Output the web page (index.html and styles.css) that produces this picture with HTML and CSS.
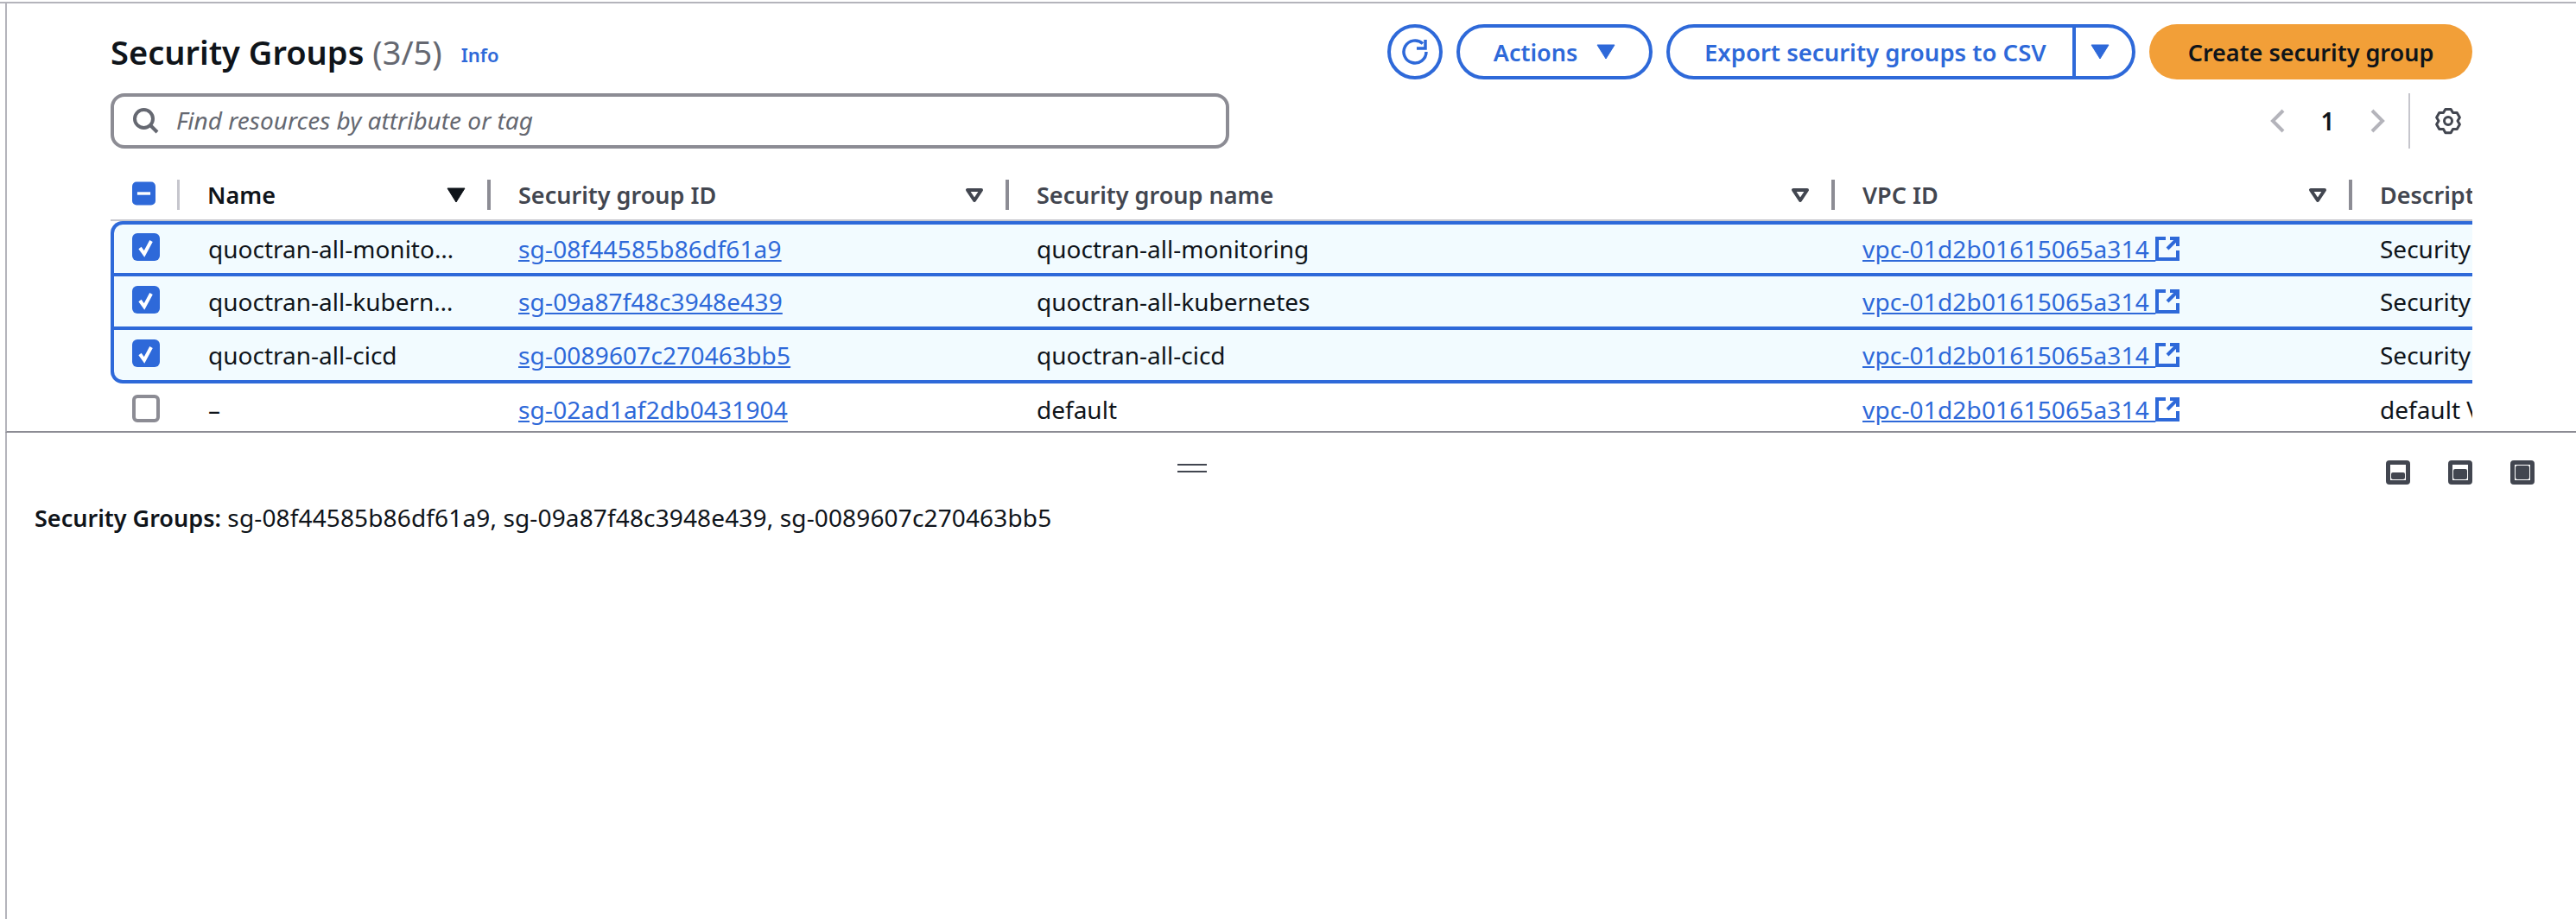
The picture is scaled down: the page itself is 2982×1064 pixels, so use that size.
FILE: index.html
```html
<!DOCTYPE html>
<html lang="en">
<head>
  <meta charset="UTF-8">
  <title>Security Groups</title>
  <link rel="stylesheet" href="styles.css">
</head>
<body>
  <svg class="defs" width="0" height="0">
    <symbol id="ext" viewBox="0 0 28 28">
      <path d="M12 2H2v24h24V16M17 2h9v9M26 2L14 14" fill="none" stroke="currentColor" stroke-width="4"/>
    </symbol>
    <symbol id="check" viewBox="0 0 32 32">
      <rect width="32" height="32" rx="6" fill="#2e69d9"/>
      <path d="M9 17l5 7 8-15" fill="none" stroke="#fff" stroke-width="4"/>
    </symbol>
    <symbol id="sort" viewBox="0 0 22 18">
      <path d="M3 3h16l-8 12z" fill="none" stroke="currentColor" stroke-width="4" stroke-linejoin="round"/>
    </symbol>
    <symbol id="caret" viewBox="0 0 22 18">
      <path d="M1 1h20l-10 16z" fill="currentColor" stroke="currentColor" stroke-linejoin="round"/>
    </symbol>
  </svg>

  <div class="pane">
    <section class="upper">
      <div class="title-row">
        <h1 class="title">Security Groups <span class="count">(3/5)</span></h1>
        <a class="info" href="#">Info</a>
        <div class="actions">
          <button class="btn btn-icon">
            <svg width="32" height="34" viewBox="0 0 32 32" fill="none" stroke="currentColor" stroke-width="3.5"><path d="M29 16A13 13 0 1 1 25 6.600"/><path d="M28 2v10H18"/></svg>
          </button>
          <button class="btn btn-actions">Actions <svg class="caret" width="22" height="18"><use href="#caret"/></svg></button>
          <div class="btn btn-split">
            <span class="split-label">Export security groups to CSV</span>
            <span class="split-arrow"><svg class="caret" width="22" height="18"><use href="#caret"/></svg></span>
          </div>
          <button class="btn btn-primary">Create security group</button>
        </div>
      </div>

      <div class="filter-row">
        <div class="search">
          <svg width="30" height="30" viewBox="0 0 30 30" fill="none" stroke="currentColor" stroke-width="4"><circle cx="12.500" cy="12.500" r="10.500"/><path d="M20 20l8 8"/></svg>
          <span class="placeholder">Find resources by attribute or tag</span>
        </div>
        <div class="pager">
          <svg width="18" height="28" viewBox="0 0 18 28" fill="none" stroke="currentColor" stroke-width="4"><path d="M15 2L3 14l12 12"/></svg>
          <span class="page-num">1</span>
          <svg width="18" height="28" viewBox="0 0 18 28" fill="none" stroke="currentColor" stroke-width="4"><path d="M3 2l12 12L3 26"/></svg>
        </div>
        <div class="settings">
          <svg width="32" height="32" viewBox="0 0 32 32" fill="none" stroke="currentColor" stroke-width="3" stroke-linejoin="round"><path d="M12.850 2.400h6.300l2.350 4.100 4.740-.05 3.150 5.460L27 16l2.390 4.090-3.150 5.460-4.740-.02-2.350 4.110h-6.300l-2.350-4.110-4.740.02-3.150-5.460L5 16 2.610 11.910l3.150-5.460 4.740.02z"/><circle cx="16" cy="16" r="4.500"/></svg>
        </div>
      </div>

      <div class="table-wrap">
        <table class="sg-table">
          <colgroup>
            <col class="col-select">
            <col class="col-name">
            <col class="col-id">
            <col class="col-group">
            <col class="col-vpc">
            <col class="col-desc">
          </colgroup>
          <thead>
            <tr>
              <th><div class="th-inner th-select"><svg width="32" height="32" viewBox="0 0 32 32"><rect width="32" height="32" rx="6" fill="#2e69d9"/><rect x="7" y="14" width="18" height="4" fill="#fff"/></svg></div></th>
              <th><div class="th-inner sorted"><span>Name</span><svg width="22" height="18"><use href="#caret"/></svg></div></th>
              <th><div class="th-inner"><span>Security group ID</span><svg width="22" height="18"><use href="#sort"/></svg></div></th>
              <th><div class="th-inner"><span>Security group name</span><svg width="22" height="18"><use href="#sort"/></svg></div></th>
              <th><div class="th-inner"><span>VPC ID</span><svg width="22" height="18"><use href="#sort"/></svg></div></th>
              <th><div class="th-inner"><span>Description</span></div></th>
            </tr>
          </thead>
          <tbody>
            <tr class="selected first">
              <td><svg class="box" width="32" height="32"><use href="#check"/></svg></td>
              <td>quoctran-all-monitoring</td>
              <td><a href="#">sg-08f44585b86df61a9</a></td>
              <td>quoctran-all-monitoring</td>
              <td><a href="#">vpc-01d2b01615065a314 </a><svg class="ext" width="28" height="28"><use href="#ext"/></svg></td>
              <td>Security group for monitoring</td>
            </tr>
            <tr class="selected">
              <td><svg class="box" width="32" height="32"><use href="#check"/></svg></td>
              <td>quoctran-all-kubernetes</td>
              <td><a href="#">sg-09a87f48c3948e439</a></td>
              <td>quoctran-all-kubernetes</td>
              <td><a href="#">vpc-01d2b01615065a314 </a><svg class="ext" width="28" height="28"><use href="#ext"/></svg></td>
              <td>Security group for kubernetes</td>
            </tr>
            <tr class="selected last">
              <td><svg class="box" width="32" height="32"><use href="#check"/></svg></td>
              <td>quoctran-all-cicd</td>
              <td><a href="#">sg-0089607c270463bb5</a></td>
              <td>quoctran-all-cicd</td>
              <td><a href="#">vpc-01d2b01615065a314 </a><svg class="ext" width="28" height="28"><use href="#ext"/></svg></td>
              <td>Security group for cicd</td>
            </tr>
            <tr class="plain">
              <td><span class="box-empty"></span></td>
              <td>–</td>
              <td><a href="#">sg-02ad1af2db0431904</a></td>
              <td>default</td>
              <td><a href="#">vpc-01d2b01615065a314 </a><svg class="ext" width="28" height="28"><use href="#ext"/></svg></td>
              <td>default VPC security group</td>
            </tr>
          </tbody>
        </table>
      </div>
    </section>

    <section class="lower">
      <div class="lower-bar">
        <span class="handle"></span>
        <div class="split-modes">
          <svg width="28" height="28" viewBox="0 0 28 28"><rect x="2.500" y="2.500" width="23" height="23" rx="1.500" fill="none" stroke="currentColor" stroke-width="5"/><rect x="6" y="14" width="16" height="8" rx="2" fill="currentColor"/></svg>
          <svg width="28" height="28" viewBox="0 0 28 28"><rect x="2.500" y="2.500" width="23" height="23" rx="1.500" fill="none" stroke="currentColor" stroke-width="5"/><rect x="6" y="10" width="16" height="12" rx="2" fill="currentColor"/></svg>
          <svg width="28" height="28" viewBox="0 0 28 28"><rect x="2.500" y="2.500" width="23" height="23" rx="1.500" fill="none" stroke="currentColor" stroke-width="5"/><rect x="6" y="6" width="16" height="16" rx="2" fill="currentColor"/></svg>
        </div>
      </div>
      <p class="selection"><strong>Security Groups:</strong> sg-08f44585b86df61a9, sg-09a87f48c3948e439, sg-0089607c270463bb5</p>
    </section>
  </div>
</body>
</html>
```

FILE: styles.css
```css
html, body {
  margin: 0;
  padding: 0;
}
body {
  padding-top: 2px;
  background: #fff;
  color: #0f141a;
  font-family: "Noto Sans", "Open Sans", sans-serif;
  font-size: 28px;
  overflow: hidden;
}
.defs {
  position: absolute;
}
.pane {
  box-sizing: border-box;
  height: 1062px;
  border-top: 2px solid #b4b4bb;
  padding-left: 6px;
  display: flex;
  flex-direction: column;
}
.upper {
  box-sizing: border-box;
  height: 497px;
  border-left: 2px solid #b4b4bb;
  padding: 24px 120px 0;
  border-bottom: 2px solid #8c8c94;
  flex-shrink: 0;
}
.lower {
  flex: 1;
  border-left: 2px solid #b4b4bb;
}

/* title and buttons */
.title-row {
  display: flex;
  align-items: center;
  height: 64px;
}
.title {
  margin: 0;
  font-size: 38px;
  font-weight: 600;
  white-space: nowrap;
}
.count {
  color: #656871;
  font-weight: 400;
}
.info {
  margin-left: 22px;
  margin-top: 6px;
  color: #2e69d9;
  font-size: 22px;
  font-weight: 600;
  text-decoration: none;
}
.actions {
  margin-left: auto;
  display: flex;
  gap: 16px;
}
.btn {
  box-sizing: border-box;
  height: 64px;
  border: 4px solid #2e69d9;
  border-radius: 32px;
  background: #fff;
  color: #2e69d9;
  font-family: inherit;
  font-size: 27px;
  font-weight: 600;
  display: flex;
  align-items: center;
  padding: 0;
}
.btn-icon {
  width: 64px;
  justify-content: center;
}
.btn-actions {
  width: 227px;
  justify-content: center;
  gap: 22px;
}
.btn-split {
  width: 543px;
}
.split-label {
  flex: 1;
  padding-left: 40px;
  font-size: 27.500px;
  white-space: nowrap;
}
.split-arrow {
  box-sizing: border-box;
  width: 69px;
  height: 100%;
  border-left: 4px solid #2e69d9;
  display: flex;
  align-items: center;
  padding-left: 17px;
}
.btn-primary {
  width: 374px;
  justify-content: center;
  border: none;
  background: #f29f38;
  color: #0f141a;
}

/* search and pager */
.filter-row {
  display: flex;
  align-items: center;
  margin-top: 16px;
  height: 64px;
}
.search {
  box-sizing: border-box;
  width: 1295px;
  height: 64px;
  border: 4px solid #8c8c94;
  border-radius: 16px;
  display: flex;
  align-items: center;
  gap: 20px;
  padding-left: 22px;
  color: #656871;
}
.placeholder {
  font-style: italic;
  margin-bottom: 3px;
}
.pager {
  margin-left: auto;
  display: flex;
  align-items: center;
  color: #b4b4bb;
}
.page-num {
  width: 97px;
  text-align: center;
  color: #0f141a;
  font-weight: 600;
}
.settings {
  height: 64px;
  margin-left: 27px;
  margin-right: 12px;
  padding-left: 28px;
  border-left: 2px solid #c6c6cd;
  display: flex;
  align-items: center;
  color: #424650;
}

/* table */
.table-wrap {
  margin-top: 36px;
  overflow: hidden;
}
.sg-table {
  width: 3034px;
  table-layout: fixed;
  border-collapse: separate;
  border-spacing: 0;
}
.col-select { width: 80px; }
.col-name { width: 360px; }
.col-id { width: 600px; }
.col-group { width: 956px; }
.col-vpc { width: 599px; }
.col-desc { width: 439px; }
th {
  height: 35px;
  padding: 0 0 11px;
  border-bottom: 2px solid #c6c6cd;
  text-align: left;
  font-size: 27px;
  font-weight: 600;
  color: #424650;
}
.th-inner {
  box-sizing: border-box;
  height: 35px;
  display: flex;
  align-items: center;
  justify-content: space-between;
  padding: 0 25px 0 32px;
  border-right: 4px solid #8c8c94;
  white-space: nowrap;
}
th:last-child .th-inner {
  border-right: none;
}
.th-select {
  padding-left: 25px;
  border-right: 3px solid #c6c6cd;
  align-items: flex-start;
}
.sorted {
  color: #0f141a;
}
td {
  box-sizing: border-box;
  padding: 0 30px 0 32px;
  white-space: nowrap;
  overflow: hidden;
  text-overflow: ellipsis;
  vertical-align: middle;
}
td:first-child {
  padding: 0 0 4px 25px;
}
td:nth-child(2) {
  padding-left: 33px;
  padding-right: 40px;
}
td a {
  color: #2e69d9;
  letter-spacing: .17px;
}
.box,
.box-empty {
  display: block;
}
.box-empty {
  box-sizing: border-box;
  width: 32px;
  height: 32px;
  border: 4px solid #8c8c94;
  border-radius: 6px;
}
.ext {
  vertical-align: -3px;
  color: #2e69d9;
}
.selected td {
  height: 62px;
  border-top: 4px solid #2e69d9;
  background: #f2fbff;
}
.selected td:first-child {
  border-left: 4px solid #2e69d9;
  padding-left: 21px;
}
.first td {
  height: 60px;
}
.first td:first-child {
  border-top-left-radius: 14px;
}
.last td {
  height: 66px;
  border-bottom: 4px solid #2e69d9;
}
.last td:first-child {
  border-bottom-left-radius: 14px;
}
.plain td {
  height: 55px;
  padding-top: 4px;
}
.plain td:first-child {
  padding: 3px 0 0 25px;
}

/* lower panel */
.lower-bar {
  display: flex;
  align-items: flex-start;
  padding: 32px 48px 0 1355px;
}
.handle {
  margin-top: 4px;
  width: 34px;
  height: 6px;
  border-top: 2px solid #424650;
  border-bottom: 2px solid #424650;
}
.split-modes {
  margin-left: auto;
  display: flex;
  gap: 44px;
  color: #424650;
}
.selection {
  margin: 19px 0 0 32px;
  font-size: 28px;
  letter-spacing: .14px;
}
.selection strong {
  font-weight: 600;
  font-size: 27px;
  letter-spacing: 0;
}
```
